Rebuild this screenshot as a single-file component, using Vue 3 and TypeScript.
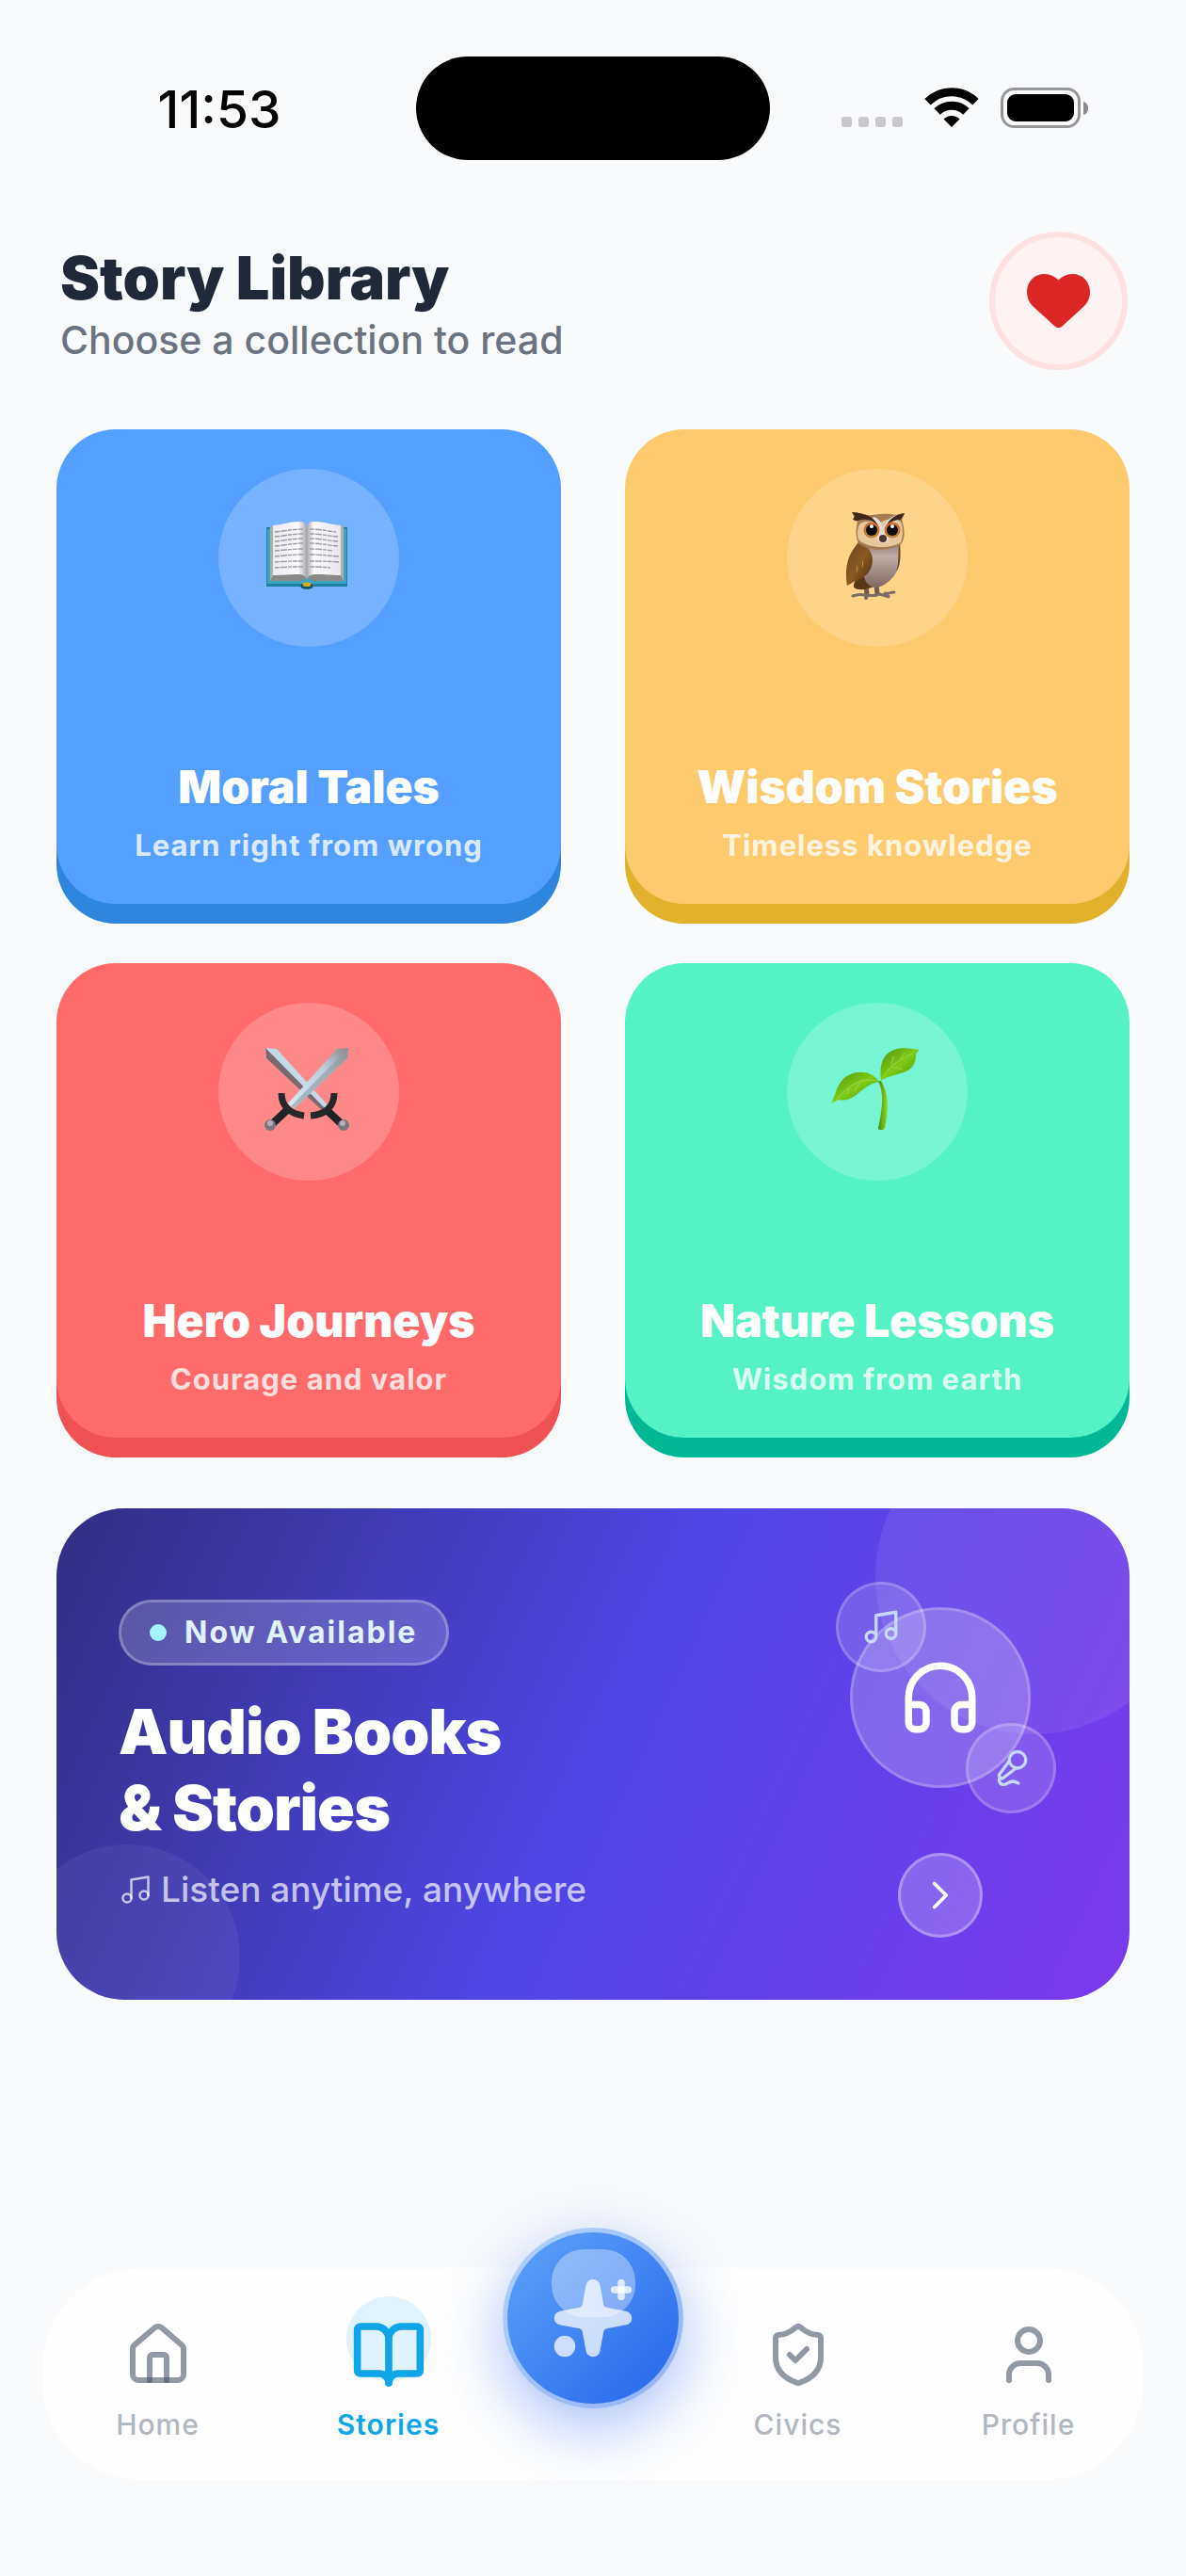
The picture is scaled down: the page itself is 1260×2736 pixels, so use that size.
<script setup lang="ts">
type Art = 'book' | 'owl' | 'swords' | 'sprout'

interface Collection {
  id: Art
  title: string
  subtitle: string
}

interface Tab {
  id: string
  label: string
  paths: string[]
  active?: boolean
}

const collections: Collection[] = [
  { id: 'book', title: 'Moral Tales', subtitle: 'Learn right from wrong' },
  { id: 'owl', title: 'Wisdom Stories', subtitle: 'Timeless knowledge' },
  { id: 'swords', title: 'Hero Journeys', subtitle: 'Courage and valor' },
  { id: 'sprout', title: 'Nature Lessons', subtitle: 'Wisdom from earth' },
]

const leftTabs: Tab[] = [
  {
    id: 'home',
    label: 'Home',
    paths: [
      'M15 21v-8a1 1 0 0 0-1-1h-4a1 1 0 0 0-1 1v8',
      'M3 10a2 2 0 0 1 .709-1.528l7-6a2 2 0 0 1 2.582 0l7 6A2 2 0 0 1 21 10v9a2 2 0 0 1-2 2H5a2 2 0 0 1-2-2z',
    ],
  },
  {
    id: 'stories',
    label: 'Stories',
    active: true,
    paths: [
      'M12 7v14',
      'M3 18a1 1 0 0 1-1-1V4a1 1 0 0 1 1-1h5a4 4 0 0 1 4 4 4 4 0 0 1 4-4h5a1 1 0 0 1 1 1v13a1 1 0 0 1-1 1h-6a3 3 0 0 0-3 3 3 3 0 0 0-3-3z',
    ],
  },
]

const rightTabs: Tab[] = [
  {
    id: 'civics',
    label: 'Civics',
    paths: [
      'M20 13c0 5-3.5 7.5-7.66 8.95a1 1 0 0 1-.67-.01C7.5 20.5 4 18 4 13V6a1 1 0 0 1 1-1c2 0 4.5-1.2 6.24-2.72a1.17 1.17 0 0 1 1.52 0C14.51 3.81 17 5 19 5a1 1 0 0 1 1 1z',
      'm9 12 2 2 4-4',
    ],
  },
  {
    id: 'profile',
    label: 'Profile',
    paths: [
      'M19 21v-2a4 4 0 0 0-4-4H9a4 4 0 0 0-4 4v2',
      'M12 3a4 4 0 1 1 0 8a4 4 0 1 1 0-8z',
    ],
  },
]
</script>

<template>
  <div class="screen">
    <div class="status">
      <span class="clock">11:53</span>
      <div class="island"></div>
      <div class="status-icons">
        <div class="dots"><i></i><i></i><i></i><i></i></div>
        <svg class="wifi" viewBox="0 0 58 42" fill="none" stroke="#000" stroke-width="9">
          <path d="M3.500 15.300a36.200 36.200 0 0 1 51 0" />
          <path d="M13.600 25.500a21.800 21.800 0 0 1 30.800 0" />
          <path d="M29 42l-8.500-8.500a12 12 0 0 1 17 0z" fill="#000" stroke="none" />
        </svg>
        <svg class="battery" viewBox="0 0 94 44">
          <rect x="1.500" y="1.500" width="82" height="40" rx="13" fill="none" stroke="#959698" stroke-width="3" />
          <rect x="7" y="7" width="71" height="29" rx="9" fill="#000" />
          <path d="M88 15c4 1.500 5 4 5 7s-1 5.500-5 7z" fill="#8a8b8d" />
        </svg>
      </div>
    </div>

    <header class="header">
      <div class="heading">
        <h1>Story Library</h1>
        <p>Choose a collection to read</p>
      </div>
      <button class="favorite" type="button" aria-label="Favorites">
        <svg viewBox="0 0 67 57" fill="#dc2626">
          <path d="M33.500 57c-2 0-3-.6-5-2.500L6 34C2 30 0 25 0 19 0 8 8 0 18.500 0 25 0 30 3 33.500 6.500 37 3 42 0 48.500 0 59 0 67 8 67 19c0 6-2 11-6 15L38.500 54.500c-2 1.900-3 2.500-5 2.500z" />
        </svg>
      </button>
    </header>

    <main class="content">
      <section class="grid">
        <button v-for="c in collections" :key="c.id" type="button" class="card" :class="c.id">
          <span class="art">
            <svg v-if="c.id === 'book'" class="pic-book" viewBox="0 0 86 72">
              <defs>
                <linearGradient id="pageL" x1="0" x2="1">
                  <stop offset="0" stop-color="#e9e9f0" />
                  <stop offset=".75" stop-color="#fbfbfd" />
                  <stop offset="1" stop-color="#a5a5ad" />
                </linearGradient>
                <linearGradient id="pageR" x1="0" x2="1">
                  <stop offset="0" stop-color="#a5a5ad" />
                  <stop offset=".2" stop-color="#fbfbfd" />
                  <stop offset="1" stop-color="#e6e6ee" />
                </linearGradient>
              </defs>
              <path d="M0 6h86v63H50c-2 4-12 4-14 0H0z" fill="#1f7f9f" />
              <path d="M1 8h84v58H1z" fill="#3ba3c4" />
              <path d="M37 66h12v4c-3 2-9 2-12 0z" fill="#15506b" />
              <path d="M38 66c2-2 8-2 10 0l-2 3h-6z" fill="#cfae1c" />
              <path d="M4 63l3-7h33l3 5 3-5h33l3 7H49c-3-3-9-3-12 0z" fill="#8b8987" />
              <path d="M4 5l3-1v53l-3 6zM82 5l-3-1v53l3 6z" fill="#b5aea8" />
              <path d="M7 4c12-1 18-4 27-4 5 0 8 1 9 5v56c-2-4-5-5-10-5-9 0-15 1-26 1z" fill="url(#pageL)" />
              <path d="M79 4C67 3 61 0 52 0c-5 0-8 1-9 5v56c2-4 5-5 10-5 9 0 15 1 26 1z" fill="url(#pageR)" />
              <g fill="none" stroke="#9a9aa3" stroke-width="1.400" stroke-dasharray="5 1 7 1 4 1">
                <path d="M9 11c12-1 18-3 30-3M9 16c12-1 18-3 30-3M9 21c12-1 18-3 30-3M9 26c12-1 18-3 30-3M9 31c12-1 18-2 30-2M9 37c12-1 18-2 30-2M9 43c12-1 18-1 30-1M9 49c12-1 18-1 30-1" />
                <path d="M46 8c12 0 18 2 28 3M46 13c12 0 18 2 30 3M46 18c12 0 18 2 30 3M46 23c12 0 18 2 30 3M46 29c12 0 16 1 25 2M46 35c12 0 18 1 31 2M46 42c12 0 18 0 31 1M46 48c8 0 14 0 22 1" />
              </g>
            </svg>

            <svg v-else-if="c.id === 'owl'" class="pic-owl" viewBox="0 0 64 94">
              <defs>
                <linearGradient id="belly" x1="0" x2="0" y1="0" y2="1">
                  <stop offset="0" stop-color="#85706a" />
                  <stop offset=".35" stop-color="#c0aea6" />
                  <stop offset="1" stop-color="#7f6860" />
                </linearGradient>
                <linearGradient id="wing" x1="0" x2="1" y1="0" y2="1">
                  <stop offset="0" stop-color="#6b4425" />
                  <stop offset=".5" stop-color="#8b5a22" />
                  <stop offset="1" stop-color="#4a2a12" />
                </linearGradient>
              </defs>
              <path d="M22 78l1 11M33 78l1 10" stroke="#6e5a50" stroke-width="5" />
              <path d="M8 90c5-2 9-2 13-1l1 4 2-4c5 1 9 1 12-1l11 3-6-4c5 1 7-1 11-1" fill="none" stroke="#7d6c64" stroke-width="3" stroke-linecap="round" />
              <path d="M12 72c-4 6-5 10 2 11 10 1 20-4 23-8l-9-9z" fill="#5a351a" />
              <path d="M14 30c12 6 34 6 44 0-2 10 1 24-3 33-3 8-15 18-22 18-8 0-14-6-14-20z" fill="url(#belly)" />
              <path d="M58 33c-3 10 0 22-4 31 5-5 5-18 4-31z" fill="#6a4122" />
              <path d="M14 33c8 2 14 8 15 18 0 13-8 20-20 24l-7 4c-2-12-1-22 2-30 3-7 6-11 10-16z" fill="url(#wing)" />
              <path d="M12 58c2 1 1 6 0 8zM18 52c2 2 1 6 0 9z" fill="#c08a48" />
              <path d="M7 1c9 0 14 4 22 3 9-1 16-2 24 0 4-1 7-2 10-2-1 3-2 5-3 7 3 9 4 18 0 25-10 9-36 9-46 0-3-7-3-15-1-23L9 10l1-3z" fill="#a77b50" />
              <path d="M14 16c4-7 12-6 22-2 3-5 13-8 23-3 3 8 2 17 0 22-10 7-34 7-44-2-3-4-2-10-1-15z" fill="#e6c79d" />
              <path d="M31 6c6 3 8 7 9 12 2-5 5-10 12-13 6-1 7 0 8 3-8 3-13 11-14 18 1 5-1 8-5 8-5 0-7-3-7-6 2-8-2-15-9-19z" fill="#e5dcd8" />
              <path d="M7 1c15 1 25 5 29 17C31 9 22 7 13 10l-5-1 2-4zM63 2C52 4 46 9 43 17c3-5 9-8 16-8z" fill="#3f2518" />
              <circle cx="28" cy="20" r="8.500" fill="#d4692c" />
              <circle cx="50" cy="20" r="8.500" fill="#d4692c" />
              <circle cx="28" cy="21" r="7" fill="#b98a16" />
              <circle cx="50" cy="21" r="7" fill="#b98a16" />
              <circle cx="28" cy="20" r="6" fill="#0c0d10" />
              <circle cx="50" cy="20" r="6" fill="#0c0d10" />
              <circle cx="28" cy="16" r="2" fill="#fff" />
              <circle cx="50" cy="16" r="2" fill="#fff" />
              <ellipse cx="40" cy="29" rx="4" ry="4" fill="#4d352b" />
            </svg>

            <svg v-else-if="c.id === 'swords'" class="pic-swords" viewBox="0 0 90 90">
              <defs>
                <linearGradient id="steel" x1="1" x2="0" y1="0" y2="1">
                  <stop offset="0" stop-color="#8b8588" />
                  <stop offset=".35" stop-color="#b9ccd8" />
                  <stop offset="1" stop-color="#d4edfa" />
                </linearGradient>
              </defs>
              <path d="M65 66l16 15" stroke="#1f2325" stroke-width="8" />
              <path d="M1 1l12 1 56 62-5 5L2 12z" fill="#c3dbe8" />
              <path d="M1 1l65 66-3 2L2 12z" fill="#79696e" />
              <path d="M74 49c0 14-9 23-25 24" fill="none" stroke="#262728" stroke-width="7" />
              <circle cx="84" cy="83" r="6" fill="#7d757d" />
              <circle cx="83" cy="81" r="3" fill="#b8aeb5" />
              <path d="M25 66L9 81" stroke="#1f2325" stroke-width="8" />
              <path d="M89 1L77 2 25 60l6 6L88 12z" fill="url(#steel)" />
              <path d="M89 1L28 63l3 3L88 12z" fill="#8d9aa3" opacity=".6" />
              <path d="M18 49c0 14 9 22 24 24" fill="none" stroke="#262728" stroke-width="7" />
              <circle cx="6" cy="83" r="6" fill="#7d757d" />
              <circle cx="6" cy="81" r="3" fill="#b8aeb5" />
            </svg>

            <svg v-else class="pic-sprout" viewBox="0 0 94 88">
              <defs>
                <linearGradient id="leaf" x1="0" x2="1" y1="0" y2="1">
                  <stop offset="0" stop-color="#4f8f0c" />
                  <stop offset=".5" stop-color="#7ccc15" />
                  <stop offset="1" stop-color="#4c850b" />
                </linearGradient>
                <linearGradient id="stem" x1="0" x2="1">
                  <stop offset="0" stop-color="#4b8a0b" />
                  <stop offset="1" stop-color="#8ddb25" />
                </linearGradient>
              </defs>
              <path d="M50 35c6 12 5 28 0 50 0 3 6 3 7 0 4-18 5-36-4-50z" fill="url(#stem)" />
              <path d="M51 36C42 22 22 24 13 33 5 41 5 50 0 59l7-4c20 4 24-16 44-19z" fill="url(#leaf)" />
              <path d="M53 35c-2-16 1-30 17-34 8-2 16 0 24 1l-4 4c1 25-25 19-37 29z" fill="url(#leaf)" />
              <path d="M49 35C30 31 20 40 6 54M54 33C61 20 70 14 88 5M20 40l-3 9M32 34l-7 12M64 20l12 3M66 9l-2 9M78 5l-5 8" fill="none" stroke="#a5d65a" stroke-width="1.200" opacity=".7" />
            </svg>
          </span>
          <span class="card-title">{{ c.title }}</span>
          <span class="card-sub">{{ c.subtitle }}</span>
        </button>
      </section>

      <section class="banner">
        <div class="bubble bubble-top"></div>
        <div class="bubble bubble-bottom"></div>
        <div class="banner-text">
          <div class="pill"><i></i><span>Now Available</span></div>
          <h2>Audio Books<br />&amp; Stories</h2>
          <p class="listen">
            <svg class="line-icon" viewBox="0 0 24 24" stroke-width="1.700">
              <path d="M9 18V5l12-2v13" />
              <circle cx="6" cy="18" r="3" />
              <circle cx="18" cy="16" r="3" />
            </svg>
            <span>Listen anytime, anywhere</span>
          </p>
        </div>
        <div class="banner-side">
          <div class="disc">
            <svg class="line-icon headphones" viewBox="0 0 24 24" stroke-width="2">
              <path d="M3 14h3a2 2 0 0 1 2 2v3a2 2 0 0 1-2 2H5a2 2 0 0 1-2-2v-7a9 9 0 0 1 18 0v7a2 2 0 0 1-2 2h-1a2 2 0 0 1-2-2v-3a2 2 0 0 1 2-2h3" />
            </svg>
            <div class="mini mini-note">
              <svg class="line-icon" viewBox="0 0 24 24" stroke-width="1.900">
                <path d="M9 18V5l12-2v13" />
                <circle cx="6" cy="18" r="3" />
                <circle cx="18" cy="16" r="3" />
              </svg>
            </div>
            <div class="mini mini-mic">
              <svg class="line-icon" viewBox="0 0 24 24" stroke-width="1.900">
                <path d="m11 7.601-5.994 8.190a1 1 0 0 0 .1 1.298l.817.818a1 1 0 0 0 1.314.087L15.090 12" />
                <path d="M16.500 21.174C15.500 20.500 14.372 20 13 20c-2.058 0-3.928 2.356-6 2-2.072-.356-2.775-3.369-1.500-4.500" />
                <circle cx="16" cy="7" r="5" />
              </svg>
            </div>
          </div>
          <button class="go" type="button" aria-label="Open audio books">
            <svg class="line-icon" viewBox="0 0 24 24" stroke-width="1.800">
              <path d="m9 18 6-6-6-6" />
            </svg>
          </button>
        </div>
      </section>
    </main>

    <nav class="tabs">
      <a v-for="t in leftTabs" :key="t.id" href="#" class="tab" :class="{ active: t.active }">
        <span class="tab-icon">
          <svg class="line-icon" viewBox="0 0 24 24" :stroke-width="t.active ? 2.3 : 2">
            <path v-for="p in t.paths" :key="p" :d="p" />
          </svg>
        </span>
        <span>{{ t.label }}</span>
      </a>
      <div class="fab-slot">
        <button class="fab" type="button" aria-label="Create">
          <span class="shine"></span>
          <svg class="line-icon" viewBox="0 0 24 24" stroke-width="2">
            <g opacity=".74" fill="#fff">
              <path d="M11.017 2.814a1 1 0 0 1 1.966 0l1.051 5.558a2 2 0 0 0 1.594 1.594l5.558 1.051a1 1 0 0 1 0 1.966l-5.558 1.051a2 2 0 0 0-1.594 1.594l-1.051 5.558a1 1 0 0 1-1.966 0l-1.051-5.558a2 2 0 0 0-1.594-1.594l-5.558-1.051a1 1 0 0 1 0-1.966l5.558-1.051a2 2 0 0 0 1.594-1.594z" />
              <circle cx="4" cy="20" r="2" />
            </g>
            <path d="M20 2v4" opacity=".74" />
            <path d="M22 4h-4" opacity=".74" />
          </svg>
        </button>
      </div>
      <a v-for="t in rightTabs" :key="t.id" href="#" class="tab">
        <span class="tab-icon">
          <svg class="line-icon" viewBox="0 0 24 24" stroke-width="2">
            <path v-for="p in t.paths" :key="p" :d="p" />
          </svg>
        </span>
        <span>{{ t.label }}</span>
      </a>
    </nav>
  </div>
</template>

<style>
body {
  margin: 0;
  background: #f9fafc;
}
</style>

<style scoped>
* {
  box-sizing: border-box;
}

.screen {
  display: flex;
  flex-direction: column;
  min-height: 100vh;
  background: #f9fafc;
  font-family: Inter, "Liberation Sans", sans-serif;
  overflow: hidden;
}

h1,
h2,
p {
  margin: 0;
}

button {
  border: 0;
  padding: 0;
  font-family: inherit;
  cursor: pointer;
}

.line-icon {
  display: block;
  fill: none;
  stroke: currentColor;
  stroke-linecap: round;
  stroke-linejoin: round;
}

/* Status bar */
.status {
  display: grid;
  grid-template-columns: 1fr 376px 1fr;
  align-items: center;
  padding-top: 60px;
}

.clock {
  padding: 2px 0 0 24px;
  font-size: 55px;
  line-height: 64px;
  font-weight: 500;
  text-align: center;
}

.island {
  height: 110px;
  border-radius: 55px;
  background: #000;
}

.status-icons {
  display: flex;
  justify-content: flex-end;
  align-items: flex-end;
  gap: 23px;
  padding-right: 103px;
}

.dots {
  display: flex;
  gap: 7px;
  padding-bottom: 2px;
}

.dots i {
  width: 11px;
  height: 11px;
  border-radius: 3px;
  background: #c8c9cb;
}

.wifi {
  width: 58px;
  height: 44px;
  padding-bottom: 2px;
}

.battery {
  width: 94px;
  height: 44px;
}

/* Header */
.header {
  display: flex;
  justify-content: space-between;
  align-items: center;
  padding: 76px 62px 0;
}

.heading {
  padding: 6px 0 0 2px;
}

h1 {
  font-size: 63px;
  line-height: 76px;
  font-weight: 900;
  color: #1f2937;
}

.heading p {
  font-size: 41px;
  line-height: 56px;
  font-weight: 500;
  color: #6b7280;
}

.favorite {
  display: grid;
  place-items: center;
  width: 147px;
  height: 147px;
  border: 6px solid #fee2e2;
  border-radius: 50%;
  background: #fef2f2;
}

.favorite svg {
  width: 67px;
  height: 57px;
}

/* Collections */
.content {
  padding: 63px 60px 0;
}

.grid {
  display: grid;
  grid-template-columns: 1fr 1fr;
  gap: 63px 68px;
}

.card {
  display: flex;
  flex-direction: column;
  align-items: center;
  height: 504px;
  padding: 42px 20px 40px;
  border-radius: 63px;
  color: #fff;
}

.book {
  background: #549fff;
  box-shadow: 0 21px 0 #2e86de;
}

.owl {
  background: #feca6e;
  box-shadow: 0 21px 0 #e1b12c;
}

.swords {
  background: #ff6b6b;
  box-shadow: 0 21px 0 #ee5253;
}

.sprout {
  background: #55f2c6;
  box-shadow: 0 21px 0 #00b894;
}

.art {
  display: flex;
  justify-content: center;
  align-items: center;
  width: 192px;
  height: 189px;
  margin-bottom: auto;
  padding: 0 4px 6px 0;
  border-radius: 50%;
  background: rgba(255, 255, 255, 0.2);
}

.pic-book {
  width: 86px;
  height: 72px;
}

.pic-owl {
  width: 64px;
  height: 94px;
}

.pic-swords {
  width: 90px;
  height: 90px;
}

.pic-sprout {
  width: 94px;
  height: 88px;
}

.card-title {
  font-size: 48px;
  line-height: 60px;
  font-weight: 900;
}

.card-sub {
  margin-top: 10px;
  font-size: 31px;
  line-height: 44px;
  font-weight: 700;
  letter-spacing: 1px;
  color: rgba(255, 255, 255, 0.8);
}

/* Audio banner */
.banner {
  position: relative;
  display: flex;
  justify-content: space-between;
  margin-top: 75px;
  padding: 97px 105px 66px 66px;
  border-radius: 72px;
  background: linear-gradient(115deg, #312e81, #4f46e5 50%, #7c3aed);
  color: #fff;
  overflow: hidden;
}

.bubble {
  position: absolute;
  border-radius: 50%;
}

.bubble-top {
  top: -96px;
  right: -66px;
  width: 336px;
  height: 336px;
  background: rgba(255, 255, 255, 0.08);
}

.bubble-bottom {
  left: -45px;
  bottom: -75px;
  width: 240px;
  height: 240px;
  background: rgba(255, 255, 255, 0.06);
}

.banner-text {
  position: relative;
}

.pill {
  display: inline-flex;
  align-items: center;
  gap: 19px;
  height: 70px;
  padding: 0 31px 0 30px;
  border: 3px solid rgba(255, 255, 255, 0.25);
  border-radius: 35px;
  background: rgba(255, 255, 255, 0.18);
  font-size: 32px;
  line-height: 44px;
  font-weight: 700;
  letter-spacing: 2px;
  color: #e0f2fe;
}

.pill i {
  width: 18px;
  height: 18px;
  border-radius: 50%;
  background: #a5f3fc;
}

h2 {
  margin-top: 30px;
  font-size: 66px;
  line-height: 81px;
  font-weight: 900;
  letter-spacing: -1px;
}

.listen {
  display: flex;
  align-items: center;
  gap: 9px;
  margin-top: 21px;
  font-size: 37px;
  line-height: 50px;
  font-weight: 500;
  color: rgba(255, 255, 255, 0.7);
}

.listen svg {
  width: 36px;
  height: 36px;
}

.banner-side {
  display: flex;
  flex-direction: column;
  align-items: center;
  gap: 69px;
  padding-top: 8px;
}

.disc {
  position: relative;
  display: grid;
  place-items: center;
  width: 192px;
  height: 192px;
  border: 3px solid rgba(255, 255, 255, 0.2);
  border-radius: 50%;
  background: rgba(255, 255, 255, 0.2);
}

.headphones {
  width: 90px;
  height: 90px;
}

.mini {
  position: absolute;
  display: grid;
  place-items: center;
  width: 96px;
  height: 96px;
  border: 3px solid rgba(255, 255, 255, 0.2);
  border-radius: 50%;
  background: rgba(255, 255, 255, 0.15);
  color: #c7d7fe;
}

.mini svg {
  width: 42px;
  height: 42px;
}

.mini-note {
  top: -30px;
  left: -18px;
}

.mini-mic {
  right: -30px;
  bottom: -30px;
}

.go {
  display: grid;
  place-items: center;
  width: 90px;
  height: 90px;
  border: 3px solid rgba(255, 255, 255, 0.3);
  border-radius: 50%;
  background: rgba(255, 255, 255, 0.2);
  color: #fff;
}

.go svg {
  width: 50px;
  height: 50px;
}

/* Bottom tabs */
.tabs {
  display: grid;
  grid-template-columns: 1fr 1fr 190px 1fr 1fr;
  height: 225px;
  margin: auto 45px 102px;
  border-radius: 105px;
  background: #fefefe;
}

.tab {
  display: flex;
  flex-direction: column;
  align-items: center;
  padding-top: 47px;
  font-size: 30px;
  line-height: 40px;
  font-weight: 500;
  letter-spacing: 1px;
  color: #b0b7c1;
  text-decoration: none;
}

.tab-icon {
  position: relative;
  display: grid;
  place-items: center;
  width: 90px;
  height: 90px;
  margin-bottom: 9px;
}

.tab-icon svg {
  position: relative;
  width: 72px;
  height: 72px;
  stroke: rgba(71, 85, 105, 0.6);
}

.tab.active {
  font-weight: 600;
  color: #0ea5e9;
}

.tab.active .tab-icon::before {
  content: "";
  position: absolute;
  top: -17px;
  left: 0;
  width: 90px;
  height: 90px;
  border-radius: 50%;
  background: #e0f2fe;
}

.tab.active svg {
  width: 80px;
  height: 80px;
  stroke: #0ea5e9;
}

.fab-slot {
  display: flex;
  justify-content: center;
}

.fab {
  position: relative;
  flex: none;
  display: grid;
  place-items: center;
  width: 192px;
  height: 192px;
  margin-top: -43px;
  border: 5px solid rgba(255, 255, 255, 0.5);
  border-radius: 50%;
  background: linear-gradient(135deg, #60a5fa, #2563eb) border-box;
  box-shadow: 0 20px 64px rgba(50, 105, 240, 0.42);
  color: #fff;
}

.fab svg {
  position: relative;
  width: 90px;
  height: 90px;
}

.shine {
  position: absolute;
  top: 18px;
  left: 47px;
  width: 89px;
  height: 72px;
  border-radius: 34px;
  background: rgba(255, 255, 255, 0.35);
}
</style>
